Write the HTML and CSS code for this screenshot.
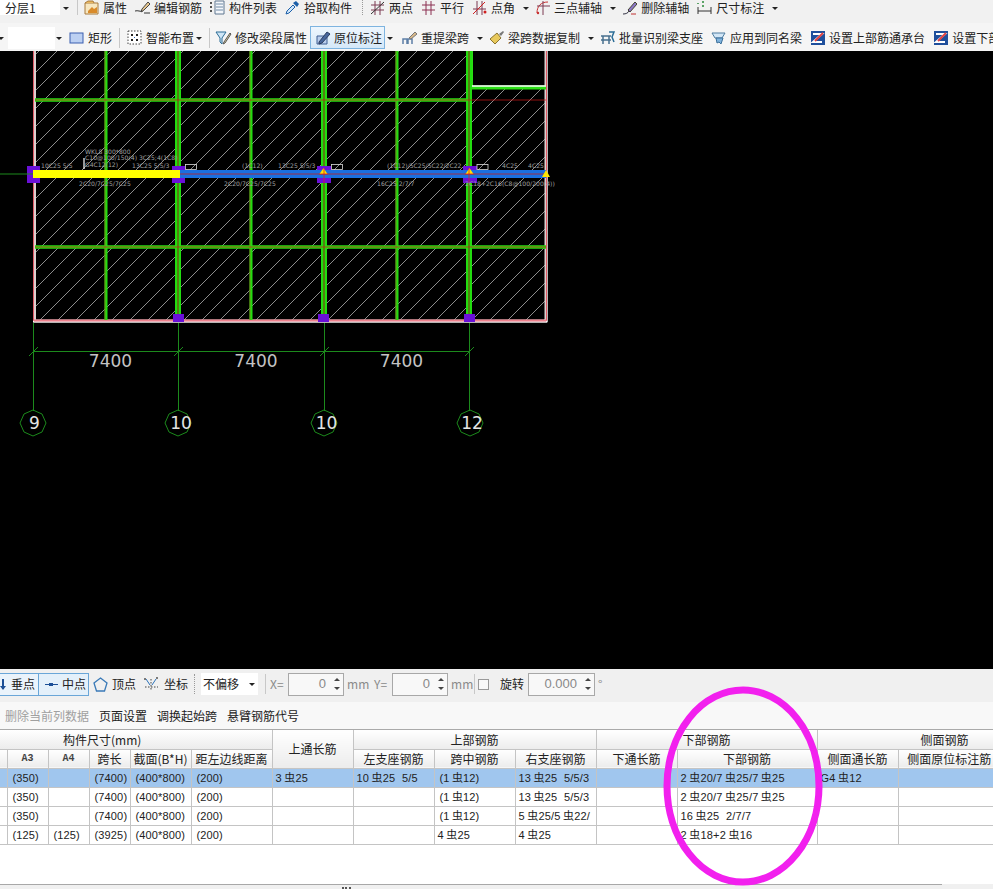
FILE: index.html
```html
<!DOCTYPE html>
<html lang="zh">
<head>
<meta charset="utf-8">
<title>梁 原位标注</title>
<link rel="stylesheet" href="styles.css">
</head>
<body>
<div class="app">
  <div class="toolbar row-one">
    <div class="combo combo-floor"><span>分层1</span></div><i class="caret caret-floor"></i>
    <i class="sep sep-a"></i>
    <div class="tool"><svg class="ico" viewBox="0 0 15 15"><path d="M1 3h13v11H1z" fill="#f7e7c0" stroke="#a87a3c"/><path d="M1 3l3-2h5l1 2" fill="#e9b860" stroke="#a87a3c"/><path d="M4 11l4-4 2 2 3-2v6H4z" fill="#d98b2b"/></svg><span>属性</span></div>
    <div class="tool"><svg class="ico" viewBox="0 0 15 15"><path d="M0 11c3-1 5 1 8 0" fill="none" stroke="#333"/><path d="M7 9l6-7 2 2-6 6-3 2z" fill="#e8c890" stroke="#444"/><path d="M9 13h6" stroke="#333"/></svg><span>编辑钢筋</span></div>
    <div class="tool"><svg class="ico" viewBox="0 0 15 15"><path d="M5 1h9v13H5z" fill="#f4f7fb" stroke="#5e7690"/><path d="M6 4h7M6 7h7M6 10h7" stroke="#6f8aa6"/><path d="M1 2v2M1 6v2M1 10v2" stroke="#555" stroke-width="2"/></svg><span>构件列表</span></div>
    <div class="tool"><svg class="ico" viewBox="0 0 15 15"><path d="M1 14l1-3 6-6 2 2-6 6z" fill="#cfe6fb" stroke="#1c5fa8"/><path d="M8 3l4 4 2-3-3-3z" fill="#1c5fa8"/></svg><span>拾取构件</span></div>
    <i class="sep sep-dot sep-b"></i>
    <div class="tool"><svg class="ico" viewBox="0 0 15 15"><path d="M5 1v14M10 1v14M1 5h13M1 10h13" stroke="#7c3a52" fill="none"/><path d="M1 14L14 2" stroke="#333"/></svg><span>两点</span></div>
    <div class="tool"><svg class="ico" viewBox="0 0 15 15"><path d="M5 1v14M10 1v14M1 5h13M1 10h13" stroke="#8a2f50" fill="none"/></svg><span>平行</span></div>
    <div class="tool"><svg class="ico" viewBox="0 0 15 15"><path d="M5 1v14M10 1v14M1 9h13" stroke="#7c3a52" fill="none"/><path d="M1 14L13 2" stroke="#d02020"/><circle cx="13" cy="12" r="1.5" fill="#d02020"/></svg><span>点角</span></div><i class="caret"></i>
    <div class="tool tool-after-caret"><svg class="ico" viewBox="0 0 15 15"><path d="M2 13C2 6 6 2 13 2" fill="none" stroke="#c83030"/><path d="M8 1v14M2 6h13" stroke="#7c3a52"/><circle cx="3" cy="13" r="1.2" fill="#c83030"/></svg><span>三点辅轴</span></div><i class="caret"></i>
    <div class="tool tool-after-caret"><svg class="ico" viewBox="0 0 15 15"><path d="M1 14c3 0 5-1 6-3" fill="none" stroke="#334"/><path d="M6 10l7-8 2 2-7 8z" fill="#8d78c8" stroke="#443"/><path d="M9 14h5" stroke="#c03030"/></svg><span>删除辅轴</span></div>
    <div class="tool"><svg class="ico" viewBox="0 0 15 15"><path d="M1 7v7M14 7v7M1 11h13" stroke="#333"/><path d="M6 1v2M6 5v2M1 3v1" stroke="#2a8a3a" stroke-width="1.5"/></svg><span>尺寸标注</span></div><i class="caret"></i>
  </div>
  <div class="toolbar row-two">
    <i class="caret caret-edge"></i>
    <div class="combo combo-blank"></div><i class="caret caret-blank"></i>
    <div class="tool tool-rect"><svg class="ico" viewBox="0 0 15 15"><rect x="1" y="3" width="13" height="10" fill="#bcd0f2" stroke="#3a5fb0"/></svg><span>矩形</span></div>
    <i class="sep sep-c"></i>
    <div class="tool"><svg class="ico" viewBox="0 0 15 15"><path d="M1 1h13v13H1z" fill="#fff" stroke="#444" stroke-dasharray="1.5 1.5"/><path d="M4 4h2v2H4zM9 4h2v2H9zM4 9h2v2H4zM9 9h2v2H9z" fill="#222"/><path d="M7 7h1v1H7z" fill="#2a6bc0"/></svg><span>智能布置</span></div><i class="caret caret-tight"></i>
    <i class="sep sep-d"></i>
    <div class="tool tool-wide"><svg class="ico ico-wide" viewBox="0 0 17 15"><path d="M1 2h10L7 8v6L5 12V8z" fill="#cfe6f6" stroke="#2c6d96"/><path d="M9 12l6-9 1 1-6 9-2 1z" fill="#e8d8a0" stroke="#555"/></svg><span>修改梁段属性</span></div>
    <div class="tool tool-active"><svg class="ico" viewBox="0 0 15 15"><path d="M1 6h10v8H1z" fill="#b9cdec" stroke="#3f5f92"/><path d="M3 12l8-10 3 2-8 9-3 1z" fill="#48679c" stroke="#2a3d60"/></svg><span>原位标注</span></div><i class="caret caret-active"></i>
    <div class="tool tool-after-caret"><svg class="ico" viewBox="0 0 15 15"><path d="M1 14V9h4v5M6 14V9h4v5" fill="none" stroke="#5d7fa6" stroke-width="1.5"/><path d="M7 8l6-6 2 2-6 5z" fill="#d9b98a" stroke="#777"/></svg><span>重提梁跨</span></div><i class="caret"></i>
    <div class="tool tool-after-caret"><svg class="ico" viewBox="0 0 15 15"><path d="M1 9l7-6 4 5-6 6z" fill="#e8c95c" stroke="#8a7430"/><path d="M10 4l4-3 1 1-3 4z" fill="#777"/></svg><span>梁跨数据复制</span></div><i class="caret"></i>
    <div class="tool tool-after-caret"><svg class="ico" viewBox="0 0 15 15"><path d="M1 6h10M3 6v8M9 6v8M1 10h10" stroke="#48708f" stroke-width="1.5" fill="none"/><path d="M9 2h5l-2 5 2 5" fill="none" stroke="#2c6d96" stroke-width="1.5"/></svg><span>批量识别梁支座</span></div>
    <div class="tool"><svg class="ico" viewBox="0 0 15 15"><path d="M1 3h13l-3 5H4z" fill="#d2e6f6" stroke="#4f7da0"/><path d="M5 8h7l-2 6-2-2-2 1z" fill="#7fb2dc" stroke="#3b6f9a"/></svg><span>应用到同名梁</span></div>
    <div class="tool"><svg class="ico" viewBox="0 0 15 15"><rect x="1" y="1" width="14" height="14" fill="#1f4f9c"/><path d="M3 4h9L3 12h9" fill="none" stroke="#fff" stroke-width="2"/><path d="M5 11l8-8" stroke="#e04040" stroke-width="2"/></svg><span>设置上部筋通承台</span></div>
    <div class="tool"><svg class="ico" viewBox="0 0 15 15"><rect x="1" y="1" width="14" height="14" fill="#1f4f9c"/><path d="M3 4h9L3 12h9" fill="none" stroke="#fff" stroke-width="2"/><path d="M5 11l8-8" stroke="#e04040" stroke-width="2"/></svg><span>设置下部筋通承台</span></div>
  </div>

  <svg class="canvas" viewBox="0 51 993 618" font-family="'DejaVu Sans', sans-serif">
    <defs>
      <pattern id="hatch" width="18" height="18" patternUnits="userSpaceOnUse"><path d="M-1 19L19 -1" stroke="#c8c8c8" stroke-width=".7"/></pattern>
    </defs>
    <rect x="0" y="51" width="993" height="618" fill="#000"/>
    <rect x="33" y="51" width="513" height="270" fill="url(#hatch)"/>
    <rect x="471" y="51" width="75" height="35" fill="#000"/>
    <!-- frame -->
    <path d="M34.500 51V321H546V51" fill="none" stroke="#dccfcf" stroke-width="3"/>
    <path d="M33.500 51V322H547V51" fill="none" stroke="#fff" stroke-width="1"/>
    <path d="M33.500 51V320.500H546.500V51" fill="none" stroke="#e05a66" stroke-width="1"/>
    <path d="M34 320.500H546" stroke="#ee808c" stroke-width="2"/>
    <!-- cutout -->
    <path d="M471 51V87.500H546" fill="none" stroke="#2ae014" stroke-width="4"/>
    <path d="M471 51V86H546" fill="none" stroke="#fff" stroke-width="1.5"/>
    <!-- green grid -->
    <g stroke="#22dd10">
      <path d="M35 100H470M35 247H546" stroke-width="3.5"/>
      <path d="M106 51V320M251 51V320M397 51V320" stroke-width="3"/>
      <path d="M178 51V320M324 51V320M469 51V320" stroke-width="6"/>
    </g>
    <g stroke="#8a7a20" stroke-width=".8">
      <path d="M105 51V320M250 51V320M396 51V320"/>
    </g>
    <path d="M178 51V320M324 51V320M469 51V320" stroke="#6a5a10" stroke-width="1.4"/>
    <path d="M35 100H546M35 247H546" stroke="#d01818" stroke-width=".7"/>
    <!-- columns at beam -->
    <g fill="#6a10d8">
      <rect x="27" y="166" width="13" height="17"/>
      <rect x="172" y="166" width="13" height="17"/>
      <rect x="317" y="166" width="14" height="17"/>
      <rect x="463" y="166" width="14" height="17"/>
      <rect x="173" y="314" width="11" height="8"/>
      <rect x="318" y="314" width="11" height="8"/>
      <rect x="464" y="314" width="11" height="8"/>
    </g>
    <!-- beam -->
    <path d="M0 174H33" stroke="#1c8a1c"/>
    <rect x="180" y="170" width="366" height="8" fill="#1a6fe0"/>
    <rect x="33" y="170" width="147" height="8" fill="#ffff00"/>
    <path d="M180 174H546" stroke="#c02020" stroke-width=".8"/>
    <g fill="#ffe600">
      <path d="M323.500 168l4 6h-8z"/><path d="M469.500 168l4 6h-8z"/><path d="M546 170l4 7h-8z"/>
    </g>
    <path d="M319 174h9M465 174h9M324 168v15M469 168v15" stroke="#e02020" stroke-width=".8"/>
    <g fill="none" stroke="#ddd" stroke-width=".8">
      <rect x="185.500" y="164.500" width="11" height="5"/>
      <rect x="331.500" y="164.500" width="11" height="5"/>
      <rect x="477" y="164.500" width="11" height="5"/>
      <path d="M84 158v11" stroke="#fff" stroke-width="1.200"/>
    </g>
    <!-- beam labels -->
    <g fill="#a0a0a0" font-size="6.100">
      <text x="85" y="153.500">WKL8 300*800</text>
      <text x="85" y="160">C10@100/150(4) 3C25;4(1C8)</text>
      <text x="85" y="166.500">G4C12(12)</text>
      <text x="41" y="168">10C25 5/5</text>
      <text x="132" y="168">13C25 5/5/3</text>
      <text x="242" y="168">(1C12)</text>
      <text x="278" y="168">13C25 5/5/3</text>
      <text x="387" y="168">(1C12)/5C25/5C22/2C22</text>
      <text x="502" y="168">4C25</text>
      <text x="528" y="168">4C25</text>
      <text x="79" y="186">2C20/7C25/7C25</text>
      <text x="224" y="186">2C20/7C25/7C25</text>
      <text x="377" y="186">16C25 2/7/7</text>
      <text x="465" y="186">2C18+2C16(C8@100/200(4))</text>
    </g>
    <!-- dimensions -->
    <g stroke="#1c8a1c" fill="none">
      <path d="M33.500 323V411M178.500 323V411M324.500 323V411M469.500 323V411"/>
      <path d="M33 351.500H470"/>
      <path d="M29 356l9-9M174 356l9-9M320 356l9-9M465 356l9-9"/>
      <path d="M33 410l9 4 4 9-4 9-9 4-9-4-4-9 4-9zM178 410l9 4 4 9-4 9-9 4-9-4-4-9 4-9zM324 410l9 4 4 9-4 9-9 4-9-4-4-9 4-9zM470 410l9 4 4 9-4 9-9 4-9-4-4-9 4-9z"/>
    </g>
    <g fill="#c4c4c4" font-size="17" text-anchor="middle">
      <text x="110.500" y="367">7400</text>
      <text x="256" y="367">7400</text>
      <text x="401.500" y="367">7400</text>
    </g>
    <g fill="#e4e4e4" font-size="17" text-anchor="middle">
      <text x="34.500" y="429">9</text>
      <text x="181" y="429">10</text>
      <text x="326.500" y="429">10</text>
      <text x="472" y="429">12</text>
    </g>
  </svg>

  <div class="snapbar">
    <div class="snap snap-a"><svg class="ico-s" viewBox="0 0 8 15"><path d="M3 2v10" stroke="#1c4f96" stroke-width="2"/><path d="M0 9l3 4 3-4z" fill="#1c4f96"/></svg><span>垂点</span></div>
    <div class="snap snap-b"><svg class="ico-m" viewBox="0 0 15 15"><path d="M1 7.500h13" stroke="#1c4f96"/><rect x="5" y="6" width="4" height="3" fill="#1c4f96"/></svg><span>中点</span></div>
    <div class="tool tool-snap"><svg class="ico" viewBox="0 0 15 15"><path d="M7.500 1L14 6l-2.500 8h-8L1 6z" fill="none" stroke="#3a7ab8" stroke-width="1.300"/></svg><span>顶点</span></div>
    <div class="tool tool-coord"><svg class="ico ico-coord" viewBox="0 0 17 17"><path d="M8 3v12M2 11h13" stroke="#444" stroke-dasharray="1.500 1.500"/><path d="M3 3l4 6M13 3l-4 6" stroke="#2a70b8"/><circle cx="2" cy="3" r="1" fill="#555"/><circle cx="14" cy="2" r="1" fill="#555"/></svg><span>坐标</span></div>
    <i class="sep sep-dot sep-e"></i>
    <div class="combo combo-offset"><span>不偏移</span><i class="caret"></i></div>
    <i class="sep sep-f"></i>
    <span class="muted lbl-x">X=</span>
    <div class="spin spin-n"><span>0</span><b class="spin-arrows"><i></i><i></i></b></div>
    <span class="muted lbl-mm">mm</span>
    <span class="muted lbl-y">Y=</span>
    <div class="spin spin-n"><span>0</span><b class="spin-arrows"><i></i><i></i></b></div>
    <span class="muted lbl-mm">mm</span>
    <i class="sep sep-g"></i>
    <i class="check"></i>
    <span class="lbl-rot">旋转</span>
    <div class="spin spin-r"><span>0.000</span><b class="spin-arrows"><i></i><i></i></b></div>
    <span class="muted lbl-deg">°</span>
  </div>

  <div class="actionbar">
    <span class="action-off">删除当前列数据</span>
    <span>页面设置</span>
    <span>调换起始跨</span>
    <span>悬臂钢筋代号</span>
  </div>

  <div class="grid-wrap">
    <table class="grid">
      <colgroup>
        <col class="c7"><col class="c41"><col class="c41"><col class="c41"><col class="c61"><col class="c81"><col class="c81"><col class="c81"><col class="c81"><col class="c81"><col class="c81"><col class="c140"><col class="c81"><col class="c102"><col class="c69">
      </colgroup>
      <thead>
        <tr>
          <th colspan="6" class="th-dims">构件尺寸(mm)</th>
          <th rowspan="2">上通长筋</th>
          <th colspan="3">上部钢筋</th>
          <th colspan="2">下部钢筋</th>
          <th colspan="3" class="th-side">侧面钢筋</th>
        </tr>
        <tr>
          <th></th><th class="th-mono">A3</th><th class="th-mono">A4</th><th>跨长</th><th>截面(B*H)</th><th>距左边线距离</th>
          <th>左支座钢筋</th><th>跨中钢筋</th><th>右支座钢筋</th><th>下通长筋</th><th>下部钢筋</th><th>侧面通长筋</th><th class="th-open">侧面原位标注筋</th><th class="th-none"></th>
        </tr>
      </thead>
      <tbody>
        <tr class="selected">
          <td></td><td class="dim">(350)</td><td></td><td class="dim">(7400)</td><td class="dim">(400*800)</td><td class="dim">(200)</td><td>3&#8201;虫25</td><td>10&#8201;虫25&nbsp; 5/5</td><td class="dim">(1&#8201;虫12)</td><td>13&#8201;虫25&nbsp; 5/5/3</td><td></td><td>2&#8201;虫20/7&#8201;虫25/7&#8201;虫25</td><td>G4&#8201;虫12</td><td></td><td></td>
        </tr>
        <tr>
          <td></td><td class="dim">(350)</td><td></td><td class="dim">(7400)</td><td class="dim">(400*800)</td><td class="dim">(200)</td><td></td><td></td><td class="dim">(1&#8201;虫12)</td><td>13&#8201;虫25&nbsp; 5/5/3</td><td></td><td>2&#8201;虫20/7&#8201;虫25/7&#8201;虫25</td><td></td><td></td><td></td>
        </tr>
        <tr>
          <td></td><td class="dim">(350)</td><td></td><td class="dim">(7400)</td><td class="dim">(400*800)</td><td class="dim">(200)</td><td></td><td></td><td class="dim">(1&#8201;虫12)</td><td>5&#8201;虫25/5&#8201;虫22/</td><td></td><td>16&#8201;虫25&nbsp; 2/7/7</td><td></td><td></td><td></td>
        </tr>
        <tr>
          <td></td><td class="dim">(125)</td><td class="dim">(125)</td><td class="dim">(3925)</td><td class="dim">(400*800)</td><td class="dim">(200)</td><td></td><td></td><td>4&#8201;虫25</td><td>4&#8201;虫25</td><td></td><td>2&#8201;虫18+2&#8201;虫16</td><td></td><td></td><td></td>
        </tr>
      </tbody>
    </table>
  </div>
  <div class="statusbar"><span class="status-track"></span><i class="grip"></i></div>

  <svg class="marker" viewBox="0 0 160 200"><ellipse cx="80" cy="100" rx="76" ry="96" fill="none" stroke="#f220ee" stroke-width="7"/></svg>
</div>
</body>
</html>
```
FILE: styles.css
```css
* { box-sizing: border-box; }
html, body { margin: 0; padding: 0; }
body {
  width: 993px;
  height: 889px;
  overflow: hidden;
  background: #f4f4f4;
  color: #222;
  font: 12px/16px "Noto Sans CJK SC", "Liberation Sans", sans-serif;
}
i, b { display: block; font-style: normal; }
.app {
  position: relative;
  width: 993px;
  height: 889px;
  display: flex;
  flex-direction: column;
  overflow: hidden;
}

/* toolbars */
.toolbar {
  display: flex;
  align-items: center;
  white-space: nowrap;
  flex: none;
  overflow: hidden;
}
.row-one { height: 23px; background: #f1f1f1; padding-bottom: 8px; line-height: 15px; }
.row-one .combo { height: 15px; }
.row-one .sep { height: 15px; }
.row-two { height: 28px; background: #f5f5f5; padding-top: 1px; }
.tool {
  display: flex;
  align-items: center;
  gap: 4px;
  margin-right: 8px;
  flex: none;
}
.ico { width: 15px; height: 15px; flex: none; }
.ico-wide { width: 17px; margin-right: -1px; }
.ico-coord { width: 17px; height: 17px; }
.caret {
  width: 0;
  height: 0;
  border: 3px solid transparent;
  border-top: 3px solid #222;
  border-bottom: 0;
  margin: 1px 6px 0 1px;
  flex: none;
}
.tool + .caret { margin-left: 0; }
.tool-after-caret { margin-left: 0; }
.sep { width: 1px; height: 20px; background: #c8c8c8; flex: none; }
.sep-dot { background: none; border-left: 1px dotted #999; }

.combo { background: #fff; flex: none; height: 22px; display: flex; align-items: center; }
.combo-floor { width: 60px; padding-left: 5px; }
.caret-floor { margin: 1px 7px 0 3px; }
.sep-a { margin: 0 6px 0 1px; }
.sep-b { margin: 0 7px 0 2px; }
.caret-edge { margin: 1px 4px 0 -2px; }
.combo-blank { width: 47px; }
.caret-blank { margin: 1px 7px 0 1px; }
.tool-rect { margin-right: 7px; }
.sep-c { margin-right: 7px; }
.tool + .caret-tight { margin: 1px 7px 0 -6px; }
.sep-d { margin-right: 5px; }
.tool-wide { margin-right: 3px; gap: 4px; }
.tool-active {
  height: 23px;
  width: 75px;
  padding-left: 5px;
  gap: 3px;
  margin-right: 2px;
  background: linear-gradient(#eef6fd, #d5e8f8);
  border: 1px solid #7eb4e0;
}
.tool + .caret-active { margin: 1px 9px 0 0; }

/* drawing */
.canvas { display: block; width: 993px; height: 618px; flex: none; }

/* snap bar */
.snapbar {
  height: 33px;
  flex: none;
  display: flex;
  align-items: center;
  background: #f0f0f0;
  white-space: nowrap;
  padding-bottom: 3px;
}
.snap {
  height: 23px;
  display: flex;
  align-items: center;
  background: #e4f0fa;
  border: 1px solid #6aa6d8;
  flex: none;
}
.snap-a { width: 40px; margin-left: -1px; gap: 3px; padding-left: 0; background: #eaf3fb; }
.snap-b { width: 50px; gap: 5px; padding-left: 5px; margin-right: 4px; border-left: 0; }
.ico-s { width: 8px; height: 15px; }
.ico-m { width: 15px; height: 15px; margin-right: -2px; }
.tool-snap { margin-right: 7px; }
.tool-coord { margin-right: 6px; }
.sep-e { margin-right: 6px; }
.combo-offset { width: 57px; padding-left: 2px; justify-content: space-between; }
.combo-offset .caret { margin: 1px 3px 0 0; }
.sep-f { margin: 0 4px 0 7px; }
.muted { color: #8a8a8a; }
.lbl-x { width: 18px; }
.lbl-y { width: 18px; margin-left: 4px; }
.lbl-mm { width: 26px; padding-left: 3px; flex: none; }
.spin {
  height: 23px;
  background: #f8f8f8;
  border: 1px solid #a8a8a8;
  display: flex;
  align-items: center;
  justify-content: flex-end;
  flex: none;
  color: #888;
  font-family: "Liberation Sans", sans-serif;
  font-size: 13px;
}
.spin-n { width: 56px; }
.spin-r { width: 67px; }
.spin span { padding-right: 4px; }
.spin-arrows {
  width: 13px;
  display: flex;
  flex-direction: column;
  gap: 6px;
  align-items: center;
}
.spin-arrows i { width: 0; height: 0; border: 3px solid transparent; border-top: 0; border-bottom: 3px solid #444; }
.spin-arrows i + i { border-bottom: 0; border-top: 3px solid #444; }
.sep-g { margin: 0 3px 0 0; }
.check { width: 11px; height: 11px; border: 1px solid #999; background: #f8f8f8; flex: none; }
.lbl-rot { margin: 0 4px 0 11px; }
.lbl-deg { padding-left: 3px; }

/* action bar */
.actionbar {
  height: 28px;
  flex: none;
  display: flex;
  align-items: center;
  gap: 10px;
  padding-left: 5px;
  background: #f8f8f8;
  border-bottom: 1px solid #aaa;
  white-space: nowrap;
}
.action-off { color: #a0a0a0; }

/* grid */
.grid-wrap {
  height: 154px;
  flex: none;
  background: #fff;
  overflow: hidden;
}
.grid {
  table-layout: fixed;
  border-collapse: collapse;
  width: 1069px;
}
.c7 { width: 7px; }
.c41 { width: 41px; }
.c61 { width: 61px; }
.c81 { width: 81px; }
.c140 { width: 140px; }
.c102 { width: 102px; }
.c69 { width: 69px; }
.grid th, .grid td {
  height: 19px;
  padding: 0;
  border: 1px solid #c4c4c4;
  overflow: hidden;
  white-space: nowrap;
  line-height: 17px;
}
.grid tr:first-child th { border-top: 0; }
.grid tr > :first-child { border-left: 0; }
.grid th {
  font-weight: 400;
  text-align: center;
  background: linear-gradient(#ffffff, #ececec);
}
.grid td {
  padding: 1px 0 0 3px;
  font-size: 11px;
  letter-spacing: .2px;
  font-family: "Liberation Sans", "Noto Sans CJK SC", sans-serif;
}
.grid td.dim { padding-left: 5px; letter-spacing: .15px; }
.grid th.th-dims { text-align: left; padding-left: 63px; }
.grid th.th-side { text-align: left; padding-left: 103px; }
.grid th.th-mono { font: 700 10px "Liberation Mono", monospace; color: #444; }
.grid th.th-open { border-right: 0; }
.grid th.th-none { border-left: 0; }
.grid .selected td { background: #a0c6ee; }

/* bottom bar */
.statusbar {
  position: relative;
  flex: 1;
  background: #f0f0f0;
}
.status-track {
  display: block;
  width: 942px;
  height: 100%;
  border-top: 1px solid #a8a8a8;
}
.grip {
  position: absolute;
  left: 342px;
  top: 3px;
  width: 9px;
  border-top: 2px dotted #555;
}

/* hand-drawn annotation */
.marker {
  position: absolute;
  left: 663px;
  top: 686px;
  width: 160px;
  height: 200px;
}
```
